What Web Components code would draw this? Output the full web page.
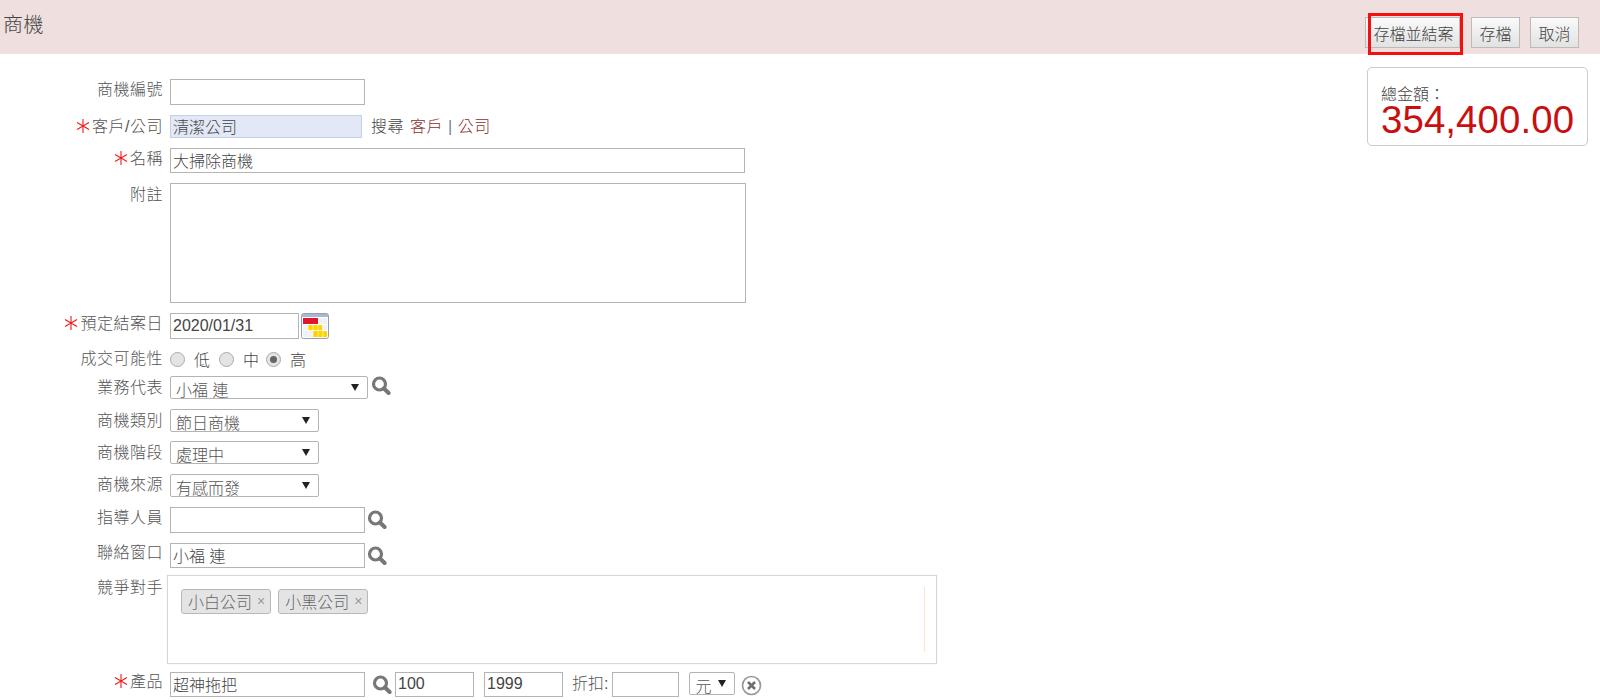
<!DOCTYPE html>
<html lang="zh-Hant">
<head>
<meta charset="utf-8">
<title>商機</title>
<style>
  html, body { margin: 0; height: 100%; overflow: hidden; background: #fff; }
  body { font: 300 16px "Liberation Sans", "Noto Sans CJK TC", sans-serif; color: #444; }
</style>
</head>
<body>
<crm-page>
  <crm-header slot="header" heading="商機">
    <crm-button style="width:95px" highlight>存檔並結案</crm-button>
    <crm-button style="width:49px;margin-left:11px">存檔</crm-button>
    <crm-button style="width:49px;margin-left:10px">取消</crm-button>
  </crm-header>

  <crm-field label="商機編號" style="margin-top:25px">
    <crm-input style="width:195px;height:26px"></crm-input>
  </crm-field>
  <crm-field label="客戶/公司" required style="margin-top:10px;--label-top:2px">
    <crm-input filled style="width:192px;height:23px">清潔公司</crm-input>
    <crm-links style="margin-left:9px"></crm-links>
  </crm-field>
  <crm-field label="名稱" required style="margin-top:10px">
    <crm-input style="width:575px;height:25px">大掃除商機</crm-input>
  </crm-field>
  <crm-field label="附註" style="margin-top:10px;--label-top:2px">
    <crm-input style="width:576px;height:120px"></crm-input>
  </crm-field>
  <crm-field label="預定結案日" required style="margin-top:10px">
    <crm-input style="width:129px;height:26px">2020/01/31</crm-input>
    <crm-calendar style="margin-left:2px"></crm-calendar>
  </crm-field>
  <crm-field label="成交可能性" style="margin-top:8px;height:24px;--label-top:2px">
    <crm-radio style="margin-top:3px">低</crm-radio>
    <crm-radio style="margin-top:3px;margin-left:9px">中</crm-radio>
    <crm-radio style="margin-top:3px;margin-left:7px" checked>高</crm-radio>
  </crm-field>
  <crm-field label="業務代表" style="margin-top:5px;--label-top:2px">
    <crm-select style="width:198px">小福 連</crm-select>
    <crm-search style="margin-left:3px"></crm-search>
  </crm-field>
  <crm-field label="商機類別" style="margin-top:10px;--label-top:2px">
    <crm-select style="width:149px">節日商機</crm-select>
  </crm-field>
  <crm-field label="商機階段" style="margin-top:9px;--label-top:2px">
    <crm-select style="width:149px">處理中</crm-select>
  </crm-field>
  <crm-field label="商機來源" style="margin-top:10px">
    <crm-select style="width:149px">有感而發</crm-select>
  </crm-field>
  <crm-field label="指導人員" style="margin-top:10px">
    <crm-input style="width:195px;height:26px"></crm-input>
    <crm-search style="margin-left:2px;margin-top:3px"></crm-search>
  </crm-field>
  <crm-field label="聯絡窗口" style="margin-top:10px;--label-top:0px">
    <crm-input style="width:195px;height:25px">小福 連</crm-input>
    <crm-search style="margin-left:2px;margin-top:3px"></crm-search>
  </crm-field>
  <crm-field label="競爭對手" style="margin-top:7px;--label-top:3px">
    <crm-tagbox style="margin-left:-3px">
      <crm-tag>小白公司</crm-tag>
      <crm-tag>小黑公司</crm-tag>
    </crm-tagbox>
  </crm-field>
  <crm-field label="產品" required style="margin-top:8px;--label-top:0px">
    <crm-input style="width:195px;height:25px">超神拖把</crm-input>
    <crm-search style="margin-left:7px;margin-top:3px"></crm-search>
    <crm-input style="width:79px;height:25px;margin-left:3px">100</crm-input>
    <crm-input style="width:79px;height:25px;margin-left:10px">1999</crm-input>
    <crm-text style="margin-left:9px;margin-top:1px">折扣:</crm-text>
    <crm-input style="width:67px;height:25px;margin-left:4px"></crm-input>
    <crm-select style="width:46px;margin-left:10px">元</crm-select>
    <crm-remove style="margin-left:6px;margin-top:3px"></crm-remove>
  </crm-field>

  <crm-total slot="aside" caption="總金額：" amount="354,400.00"></crm-total>
</crm-page>

<script>
class CrmPage extends HTMLElement {
  constructor() {
    super();
    this.attachShadow({ mode: "open" });
    this.shadowRoot.innerHTML = `
      <style>
        :host { display: block; }
        .body { display: flex; justify-content: space-between; align-items: flex-start; }
        .aside { padding: 13px 12px 0 0; }
      </style>
      <slot name="header"></slot>
      <div class="body">
        <div class="form"><slot></slot></div>
        <div class="aside"><slot name="aside"></slot></div>
      </div>`;
  }
}

class CrmHeader extends HTMLElement {
  constructor() {
    super();
    this.attachShadow({ mode: "open" });
    this.shadowRoot.innerHTML = `
      <style>
        :host { display: flex; height: 54px; background: #efdfdf; justify-content: space-between; }
        h1 { margin: 13px 0 0 3px; font-size: 20px; line-height: 24px; font-weight: 300; letter-spacing: .5px; color: #444; }
        .actions { display: flex; padding: 17px 21px 0 0; align-items: flex-start; }
      </style>
      <h1>${this.getAttribute("heading")}</h1>
      <div class="actions"><slot></slot></div>`;
  }
}

class CrmButton extends HTMLElement {
  constructor() {
    super();
    this.attachShadow({ mode: "open" });
    this.shadowRoot.innerHTML = `
      <style>
        :host { display: flex; position: relative; box-sizing: border-box; height: 31px; align-items: center; justify-content: center;
          border: 1px solid #bbb; background: linear-gradient(#fafafa, #e2e2e2); color: #444; }
        :host([highlight]) { padding-left: 2px; }
        :host([highlight])::after { content: ""; position: absolute; left: 2px; top: -5px; right: -4px; bottom: -8px;
          border: 3px solid #f21010; }
      </style>
      <slot></slot>`;
  }
}

class CrmField extends HTMLElement {
  constructor() {
    super();
    this.attachShadow({ mode: "open" });
    // the red mark is an asterisk of three thin strokes, wider than any font's
    const star = this.hasAttribute("required")
      ? `<svg class="star" width="14" height="14" viewBox="0 0 14 14" stroke="#f01a1a" stroke-width="1.1">
           <path d="M7 0v14M1 3.5l12 7M13 3.5l-12 7"/>
         </svg>`
      : "";
    this.shadowRoot.innerHTML = `
      <style>
        :host { display: flex; align-items: flex-start; }
        label { flex: none; width: 163px; box-sizing: border-box; padding-top: var(--label-top, 1px); text-align: right;
          line-height: 20px; letter-spacing: .5px; color: #555; white-space: nowrap; }
        .star { vertical-align: -1px; margin-right: 2px; }
        .control { display: flex; align-items: flex-start; margin-left: 7px; }
      </style>
      <label>${star}${this.getAttribute("label")}</label>
      <div class="control"><slot></slot></div>`;
  }
}

class CrmInput extends HTMLElement {
  constructor() {
    super();
    this.attachShadow({ mode: "open" });
    this.shadowRoot.innerHTML = `
      <style>
        :host { display: flex; flex: none; box-sizing: border-box; align-items: center; padding: 0 2px 1px;
          border: 1px solid #b4b4b4; color: #444; background: #fff; white-space: nowrap; }
        :host([filled]) { background: #e2e8f5; border-color: #c6d0e4; }
      </style>
      <slot></slot>`;
  }
}

class CrmSelect extends HTMLElement {
  constructor() {
    super();
    this.attachShadow({ mode: "open" });
    this.shadowRoot.innerHTML = `
      <style>
        :host { display: flex; flex: none; box-sizing: border-box; height: 23px; align-items: center; justify-content: space-between;
          padding: 2px 8px 0 5px; border: 1px solid #b4b4b4; border-radius: 2px; background: #fff; color: #555; overflow: hidden; white-space: nowrap; }
        i { flex: none; width: 0; height: 0; margin-top: -3px; border: 4px solid transparent; border-top: 7px solid #222; border-bottom: 0; }
      </style>
      <slot></slot><i></i>`;
  }
}

class CrmLinks extends HTMLElement {
  constructor() {
    super();
    this.attachShadow({ mode: "open" });
    this.shadowRoot.innerHTML = `
      <style>
        :host { display: flex; flex: none; line-height: 20px; margin-top: 2px; color: #444; letter-spacing: .5px; white-space: nowrap; }
        a { color: #8a3030; text-decoration: none; }
        a:first-of-type { margin-left: 6px; }
        span { margin: 0 5px; color: #6f7f9a; }
      </style>
      搜尋<a href="#">客戶</a><span>|</span><a href="#">公司</a>`;
  }
}

class CrmRadio extends HTMLElement {
  constructor() {
    super();
    this.attachShadow({ mode: "open" });
    this.shadowRoot.innerHTML = `
      <style>
        :host { display: flex; flex: none; align-items: center; height: 18px; color: #444; }
        i { box-sizing: border-box; width: 15px; height: 15px; margin-right: 9px; border: 1px solid #aaa; border-radius: 50%;
          background: #e4e4e4; display: flex; align-items: center; justify-content: center; }
        :host([checked]) i::after { content: ""; width: 7px; height: 7px; border-radius: 50%; background: #666; }
      </style>
      <i></i><slot></slot>`;
  }
}

class CrmSearch extends HTMLElement {
  constructor() {
    super();
    this.attachShadow({ mode: "open" });
    this.shadowRoot.innerHTML = `
      <style>:host { display: block; flex: none; width: 20px; height: 20px; } svg { display: block; }</style>
      <svg width="20" height="20" viewBox="0 0 20 20" fill="none" stroke="#777">
        <circle cx="8.5" cy="8" r="6" stroke-width="3.2"/>
        <path d="M13 12.5 17.6 17" stroke-width="4" stroke-linecap="round"/>
      </svg>`;
  }
}

class CrmCalendar extends HTMLElement {
  constructor() {
    super();
    this.attachShadow({ mode: "open" });
    this.shadowRoot.innerHTML = `
      <style>:host { display: block; flex: none; width: 28px; height: 26px; } svg { display: block; }</style>
      <svg width="28" height="26" viewBox="0 0 28 26">
        <rect x=".5" y=".5" width="27" height="25" rx="2" fill="#fff" stroke="#8fa0b4"/>
        <rect x="1" y="1" width="26" height="3" fill="#a9b9ca"/>
        <rect x="2" y="5" width="15" height="6" fill="#e0142e"/>
        <rect x="18" y="5" width="8" height="6" fill="#eef1f5"/>
        <rect x="2" y="12" width="5" height="12" fill="#eef1f5"/>
        <rect x="7" y="12" width="14" height="5.5" fill="#ffd400"/>
        <rect x="21" y="12" width="5" height="5.5" fill="#eef1f5"/>
        <rect x="7" y="18" width="5" height="6" fill="#eef1f5"/>
        <rect x="12" y="18" width="14" height="6" fill="#ffd400"/>
        <path d="M7 12v12M12 12v12M17 12v12M22 5v19M2 11.5h24M2 17.5h24" stroke="#fff" stroke-opacity=".7" stroke-width=".8"/>
      </svg>`;
  }
}

class CrmRemove extends HTMLElement {
  constructor() {
    super();
    this.attachShadow({ mode: "open" });
    this.shadowRoot.innerHTML = `
      <style>:host { display: block; flex: none; width: 21px; height: 21px; } svg { display: block; }</style>
      <svg width="21" height="21" viewBox="0 0 21 21" fill="none">
        <circle cx="10.5" cy="10.5" r="9" stroke="#999" stroke-width="1.7"/>
        <path d="M7 7l7 7M14 7l-7 7" stroke="#6e6e6e" stroke-width="2.6"/>
      </svg>`;
  }
}

class CrmTagbox extends HTMLElement {
  constructor() {
    super();
    this.attachShadow({ mode: "open" });
    this.shadowRoot.innerHTML = `
      <style>
        :host { display: flex; position: relative; box-sizing: border-box; width: 770px; height: 89px; gap: 7px; align-items: flex-start;
          padding: 13px 13px; border: 1px solid #d8d8d8; box-shadow: 0 0 1px #ddd; }
        /* the thin yellow rule inside the box */
        :host::after { content: ""; position: absolute; right: 11px; top: 11px; bottom: 11px; width: 1px; background: #fde6c4; }
      </style>
      <slot></slot>`;
  }
}

class CrmTag extends HTMLElement {
  constructor() {
    super();
    this.attachShadow({ mode: "open" });
    this.shadowRoot.innerHTML = `
      <style>
        :host { display: flex; flex: none; box-sizing: border-box; height: 25px; align-items: center; padding: 0 5px 1px 6px;
          border: 1px solid #b8b8b8; border-radius: 3px; background: #e4e4e4; color: #666; white-space: nowrap; }
        span { margin-left: 5px; font-size: 14px; color: #999; }
      </style>
      <slot></slot><span>×</span>`;
  }
}

class CrmText extends HTMLElement {
  constructor() {
    super();
    this.attachShadow({ mode: "open" });
    this.shadowRoot.innerHTML = `
      <style>:host { display: block; flex: none; line-height: 22px; color: #555; white-space: nowrap; }</style>
      <slot></slot>`;
  }
}

class CrmTotal extends HTMLElement {
  constructor() {
    super();
    this.attachShadow({ mode: "open" });
    this.shadowRoot.innerHTML = `
      <style>
        :host { display: block; box-sizing: border-box; width: 221px; height: 79px; padding: 17px 0 0 13px;
          border: 1px solid #ccc; border-radius: 5px; }
        .caption { line-height: 20px; color: #444; }
        .amount { font-size: 38.4px; line-height: 30px; letter-spacing: .1px; color: #c81010; white-space: nowrap; }
      </style>
      <div class="caption">${this.getAttribute("caption")}</div>
      <div class="amount">${this.getAttribute("amount")}</div>`;
  }
}

customElements.define("crm-page", CrmPage);
customElements.define("crm-header", CrmHeader);
customElements.define("crm-button", CrmButton);
customElements.define("crm-field", CrmField);
customElements.define("crm-input", CrmInput);
customElements.define("crm-select", CrmSelect);
customElements.define("crm-links", CrmLinks);
customElements.define("crm-radio", CrmRadio);
customElements.define("crm-search", CrmSearch);
customElements.define("crm-calendar", CrmCalendar);
customElements.define("crm-remove", CrmRemove);
customElements.define("crm-tagbox", CrmTagbox);
customElements.define("crm-tag", CrmTag);
customElements.define("crm-text", CrmText);
customElements.define("crm-total", CrmTotal);
</script>
</body>
</html>
